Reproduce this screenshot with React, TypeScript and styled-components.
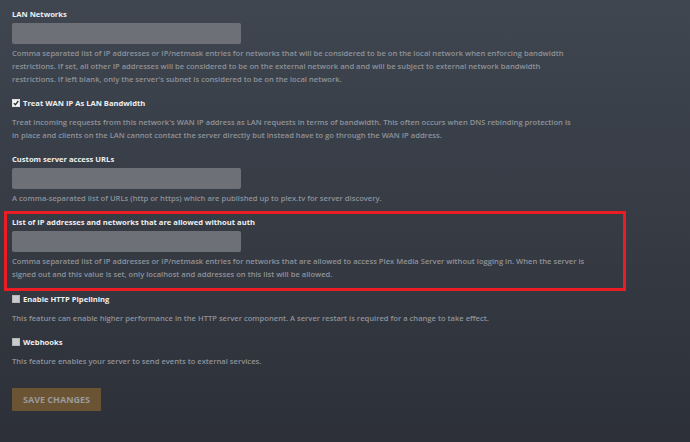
import React from "react";
import styled, {createGlobalStyle} from "styled-components";

const GlobalStyle = createGlobalStyle`
  html, body {
    margin: 0;
    padding: 0;
    height: 100%;
  }
  body {
    background: linear-gradient(180deg, #3f4650 0%, #363b44 50%, #2d3039 100%);
    font-family: "Open Sans", "DejaVu Sans", sans-serif;
  }
  #root {
    min-height: 442px;
  }
`

const Page = styled.div`
  padding: 8px 0 0 12px;
  width: 690px;
  height: 442px;
  box-sizing: border-box;
  overflow: hidden;
`

const Description = styled.p<{ $afterCheck?: boolean }>`
  margin: ${props => props.$afterCheck ? '7px' : '3px'} 0 0 0;
  max-width: 566px;
  font-size: 7.6px;
  font-weight: 600;
  line-height: 13px;
  color: #8e9299;
`

const Section = styled.div<{ $highlight?: boolean }>`
  margin: ${props => props.$highlight ? '-5px 0 2px -8px' : '0 0 11px 0'};
  ${props => props.$highlight && `
    border: 3px solid #ec1c24;
    padding: 2px 0 7px 5px;
    width: 622px;
    box-sizing: border-box;
  `}
  ${props => props.$highlight && Description} {
    max-width: 578px;
  }
`

const Label = styled.label`
  display: flex;
  align-items: center;
  gap: 3px;
  height: 12px;
  font-size: 7.6px;
  font-weight: 700;
  color: #eeeff0;
`

const Box = styled.span<{ $checked?: boolean }>`
  width: 8px;
  height: 8px;
  box-sizing: border-box;
  background: ${props => props.$checked ? '#f4f4f4' : '#c9cacc'};
  border: 1px solid ${props => props.$checked ? '#e0e0e0' : '#b5b6b8'};
  display: flex;
  align-items: center;
  justify-content: center;
`

const Input = styled.div`
  margin-top: 3px;
  width: 229px;
  height: 21px;
  border-radius: 2px;
  background: #6d7077;
`

const SaveButton = styled.button`
  margin-top: 8.5px;
  width: 89px;
  height: 23px;
  border: none;
  border-radius: 1px;
  background: #6b5434;
  color: #9a9a9a;
  font-family: "Open Sans", sans-serif;
  font-size: 9px;
  font-weight: 700;
  text-transform: uppercase;
  padding: 0;
`

const Check = () => (
  <svg width="6" height="6" viewBox="0 0 6 6">
    <path d="M0.8 3.2 L2.4 4.8 L5.3 1" stroke="#2d3139" strokeWidth="1.4" fill="none"/>
  </svg>
)

type FieldProps = {
  label: string;
  description: string;
  highlight?: boolean;
}

const TextField: React.FC<FieldProps> = ({label, description, highlight}) =>
  <Section $highlight={highlight}>
    <Label>{label}</Label>
    <Input/>
    <Description>{description}</Description>
  </Section>

const CheckField: React.FC<FieldProps & { checked?: boolean }> = ({label, description, checked}) =>
  <Section>
    <Label>
      <Box $checked={checked}>{checked && <Check/>}</Box>
      {label}
    </Label>
    <Description $afterCheck>{description}</Description>
  </Section>

export default function App() {
  return <>
    <GlobalStyle/>
    <Page>
      <TextField
        label="LAN Networks"
        description="Comma separated list of IP addresses or IP/netmask entries for networks that will be considered to be on the local network when enforcing bandwidth restrictions. If set, all other IP addresses will be considered to be on the external network and and will be subject to external network bandwidth restrictions. If left blank, only the server's subnet is considered to be on the local network."/>
      <CheckField
        checked
        label="Treat WAN IP As LAN Bandwidth"
        description="Treat incoming requests from this network's WAN IP address as LAN requests in terms of bandwidth. This often occurs when DNS rebinding protection is in place and clients on the LAN cannot contact the server directly but instead have to go through the WAN IP address."/>
      <TextField
        label="Custom server access URLs"
        description="A comma-separated list of URLs (http or https) which are published up to plex.tv for server discovery."/>
      <TextField
        highlight
        label="List of IP addresses and networks that are allowed without auth"
        description="Comma separated list of IP addresses or IP/netmask entries for networks that are allowed to access Plex Media Server without logging in. When the server is signed out and this value is set, only localhost and addresses on this list will be allowed."/>
      <CheckField
        label="Enable HTTP Pipelining"
        description="This feature can enable higher performance in the HTTP server component. A server restart is required for a change to take effect."/>
      <CheckField
        label="Webhooks"
        description="This feature enables your server to send events to external services."/>
      <SaveButton>Save Changes</SaveButton>
    </Page>
  </>
}
